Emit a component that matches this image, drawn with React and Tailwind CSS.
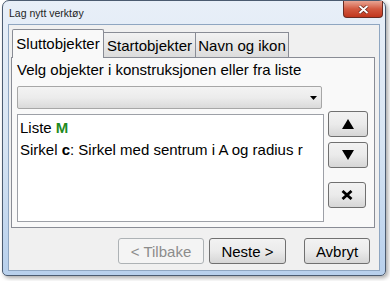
import React from 'react';

const btn =
  'flex items-center justify-center rounded-[3px] border border-[#707070] bg-gradient-to-b from-[#f2f2f2] via-[#ebebeb] to-[#d6d6d6] text-black';

export default function App() {
  return (
    <div className="w-[390px] h-[281px] bg-white overflow-hidden font-['Liberation_Sans',Arial,sans-serif]">
      {/* window frame */}
      <div className="ml-[2px] w-[384px] h-[276px] rounded-t-[7px] rounded-b-[5px] border border-[#4b5b70] bg-gradient-to-b from-[#e8eff8] via-[#d8e5f3] to-[#b8d0ec] px-[5px] flex flex-col shadow-[2px_2px_4px_rgba(0,0,0,0.35)]">
        {/* title bar */}
        <div className="h-[23px] flex justify-between">
          <span className="mt-[6px] ml-[1px] text-[10.5px] leading-[12px] text-[#1e1e1e]">Lag nytt verktøy</span>
          <div className="-mr-[3px] w-[40px] h-[17px] rounded-b-[4px] border border-t-0 border-[#6a2b22] bg-gradient-to-b from-[#e8a493] via-[#d2583f] to-[#c1361d] flex items-center justify-center">
            <svg width="11" height="9" viewBox="0 0 11 9">
              <path d="M1.5 1 L9.5 8 M9.5 1 L1.5 8" stroke="#5a1a10" strokeWidth="3.2" />
              <path d="M1.5 1 L9.5 8 M9.5 1 L1.5 8" stroke="#fff" strokeWidth="2" />
            </svg>
          </div>
        </div>

        {/* client area */}
        <div className="h-[247px] border border-[#8fa6c1] bg-[#f0f0f0] pl-[2px] pr-[5px] pt-[4px] flex flex-col">
          {/* tabs */}
          <div className="flex items-end h-[28px] relative z-10">
            <div className="ml-[1px] w-[92px] h-[29px] -mb-[1px] border border-b-0 border-[#898c95] bg-[#f9f9f9] rounded-t-[2px] text-[15px] leading-[17px] flex items-center justify-center pb-[1px]">
              Sluttobjekter
            </div>
            <div className="w-[92px] h-[25px] border border-l-0 border-b-0 border-[#898c95] bg-gradient-to-b from-[#f2f2f2] to-[#dcdcdc] text-[15px] leading-[17px] flex items-center justify-center pt-[1px]">
              Startobjekter
            </div>
            <div className="w-[93px] h-[25px] border border-l-0 border-b-0 border-[#898c95] bg-gradient-to-b from-[#f2f2f2] to-[#dcdcdc] text-[15px] leading-[17px] flex items-center justify-center pt-[1px]">
              Navn og ikon
            </div>
          </div>

          {/* tab panel */}
          <div className="w-[364px] h-[171px] border border-[#898c95] bg-[#f9f9f9] pl-[5px] pt-[3px]">
            <div className="text-[15px] leading-[17px] text-black">Velg objekter i konstruksjonen eller fra liste</div>
            <div className="mt-[8px] w-[305px] h-[23px] rounded-[2px] border border-[#a7a7a7] bg-gradient-to-b from-[#f3f3f3] via-[#ececec] to-[#dadada] flex items-center justify-end pr-[4px]">
              <svg width="7" height="4" viewBox="0 0 7 4">
                <path d="M0 0 H7 L3.5 4 Z" fill="#000" />
              </svg>
            </div>
            <div className="flex items-start">
              <div className="mt-[5px] w-[307px] h-[108px] border border-[#9da0a7] bg-white pl-[2px] pt-[2px] text-[15px] leading-[22px] text-black">
                <div>
                  Liste <span className="font-bold text-[#1f8a1f]">M</span>
                </div>
                <div>
                  Sirkel <span className="font-bold">c</span>: Sirkel med sentrum i A og radius r
                </div>
              </div>
              <div className="ml-[4px] mt-[2px] flex flex-col">
                <button className={`${btn} w-[40px] h-[26px]`}>
                  <svg width="12" height="10" viewBox="0 0 12 10">
                    <path d="M6 0 L12 10 H0 Z" fill="#000" />
                  </svg>
                </button>
                <button className={`${btn} w-[40px] h-[26px] mt-[5px]`}>
                  <svg width="12" height="10" viewBox="0 0 12 10">
                    <path d="M0 0 H12 L6 10 Z" fill="#000" />
                  </svg>
                </button>
                <button className={`${btn} w-[38px] h-[26px] mt-[14px]`}>
                  <svg width="12" height="10" viewBox="0 0 12 10">
                    <path d="M1.5 1 L10.5 9 M10.5 1 L1.5 9" stroke="#000" strokeWidth="2.8" />
                  </svg>
                </button>
              </div>
            </div>
          </div>

          {/* dialog buttons */}
          <div className="mt-[10px] flex justify-end pr-[4px] text-[15px] leading-[17px]">
            <button className="w-[86px] h-[26px] rounded-[3px] border border-[#adb2b5] bg-[#f4f4f4] text-[#8c8c8c] flex items-center justify-center">
              &lt; Tilbake
            </button>
            <button className={`${btn} ml-[5px] w-[77px] h-[26px]`}>Neste &gt;</button>
            <button className={`${btn} ml-[18px] w-[66px] h-[26px]`}>Avbryt</button>
          </div>
        </div>
      </div>
    </div>
  );
}
